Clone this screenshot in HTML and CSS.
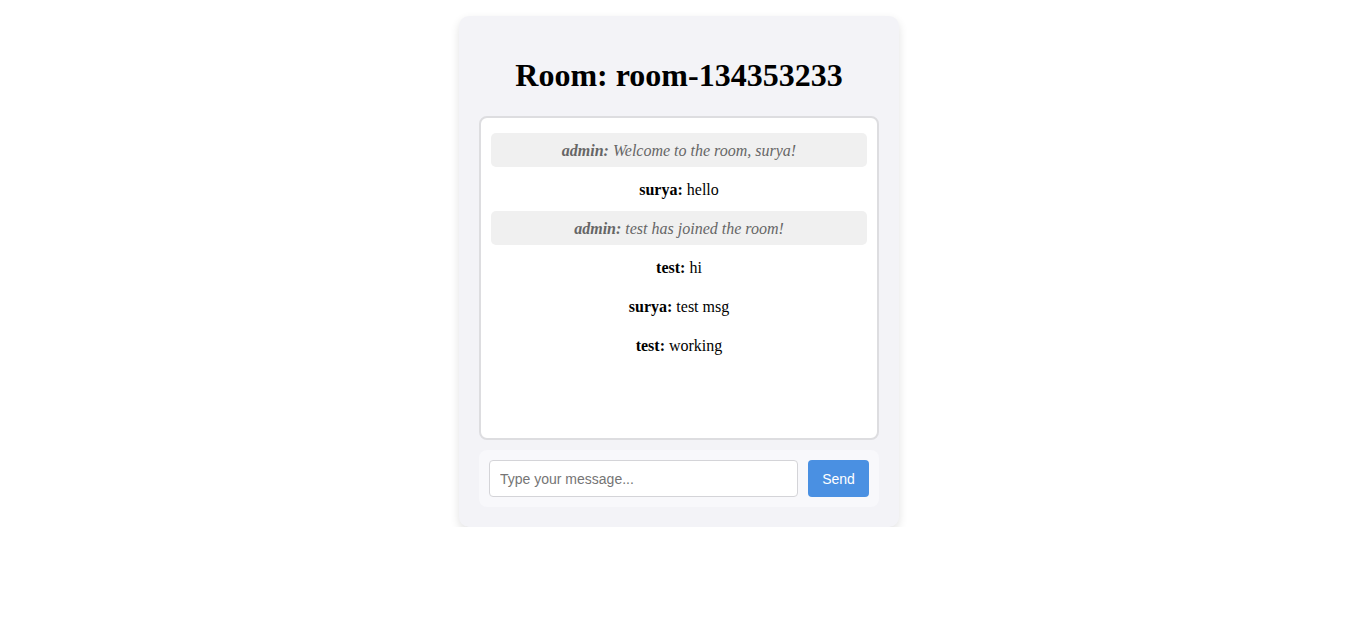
FILE: index.html
```html
<!DOCTYPE html>
<html>
<head>
<meta charset="utf-8">
<link rel="stylesheet" href="styles.css">
</head>
<body>
<div class="page">
  <div class="card">
    <h1 class="title">Room: room-134353233</h1>
    <div class="chat">
      <div class="msg system"><strong>admin:</strong> Welcome to the room, surya!</div>
      <div class="msg"><strong>surya:</strong> hello</div>
      <div class="msg system"><strong>admin:</strong> test has joined the room!</div>
      <div class="msg"><strong>test:</strong> hi</div>
      <div class="msg"><strong>surya:</strong> test msg</div>
      <div class="msg"><strong>test:</strong> working</div>
    </div>
    <form class="composer">
      <input class="input" type="text" placeholder="Type your message...">
      <button class="send" type="button">Send</button>
    </form>
  </div>
</div>
</body>
</html>
```

FILE: styles.css
```css
html, body {
  margin: 0;
  padding: 0;
  background: #ffffff;
}
.page {
  display: flex;
  justify-content: center;
  padding: 16px 0 0 6px;
  font-family: "Liberation Serif", "Times New Roman", serif;
}
.card {
  width: 440px;
  box-sizing: border-box;
  padding: 20px;
  background: #f3f3f7;
  border-radius: 10px;
  box-shadow: 0 4px 10px rgba(0, 0, 0, 0.12);
}
.title {
  margin: 21px 0 22px;
  text-align: center;
  font-size: 32px;
  font-weight: bold;
  color: #000;
}
.chat {
  height: 300px;
  padding: 10px;
  background: #fff;
  border: 2px solid #dddde0;
  border-radius: 8px;
  overflow-y: auto;
}
.msg {
  margin: 5px 0;
  padding: 9px 8px 7px;
  text-align: center;
  font-size: 16px;
  line-height: 18px;
  color: #000;
  border-radius: 5px;
}
.system {
  background: #f0f0f0;
  color: #666;
  font-style: italic;
}
.composer {
  display: flex;
  gap: 10px;
  margin: 10px 0 0;
  padding: 10px;
  background: #f8f8fb;
  border-radius: 8px;
}
.input {
  flex: 1;
  height: 37px;
  box-sizing: border-box;
  padding: 0 10px;
  border: 1px solid #d4d4d8;
  border-radius: 4px;
  font-family: "Liberation Sans", Arial, sans-serif;
  font-size: 14px;
  background: #fff;
  outline: none;
}
.input::placeholder {
  color: #757575;
}
.send {
  width: 61px;
  height: 37px;
  border: none;
  border-radius: 4px;
  background: #4a90e2;
  color: #fff;
  font-family: "Liberation Sans", Arial, sans-serif;
  font-size: 14px;
  padding: 0;
}
```
